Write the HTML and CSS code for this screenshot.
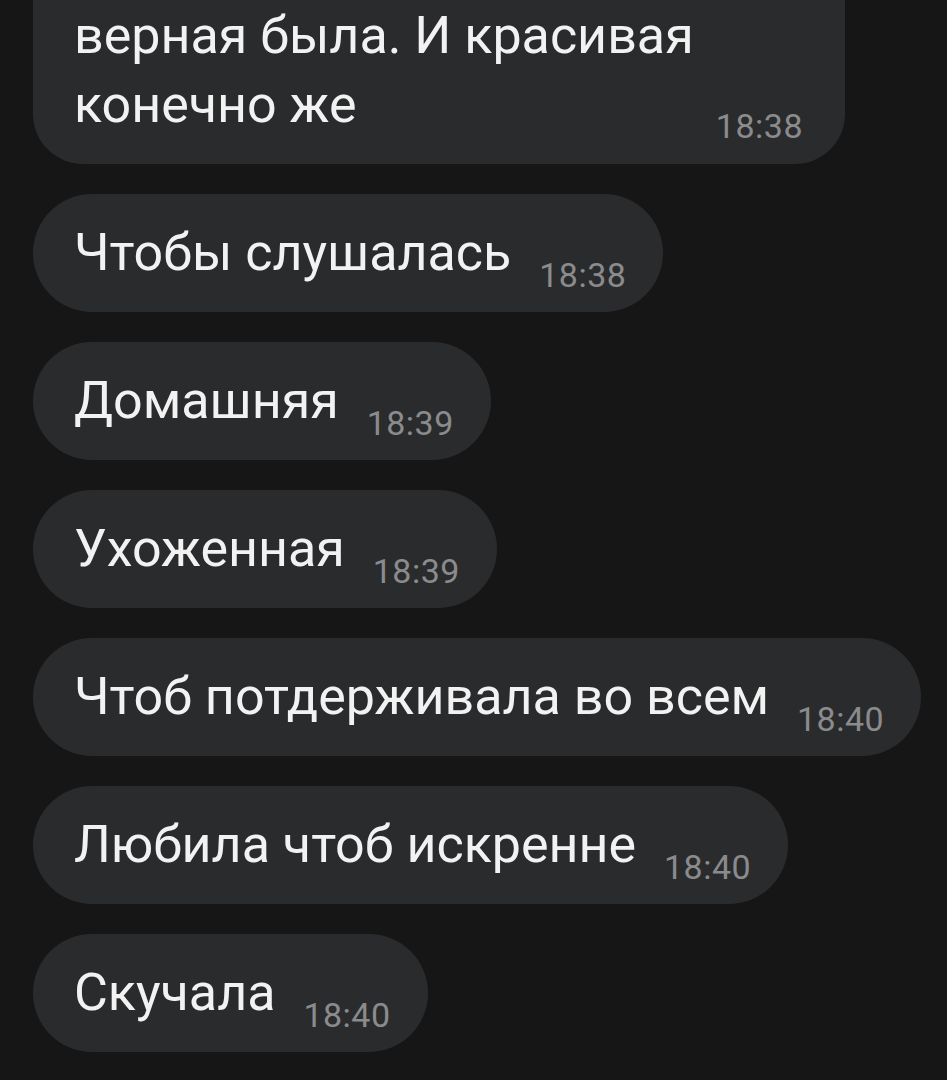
FILE: index.html
```html
<!DOCTYPE html>
<html>
<head>
  <title>Chat</title>
  <link rel="stylesheet" href="styles.css">
</head>
<body>
  <div class="chat">
    <div class="msg msg-long">
      <span class="text">верная была. И красивая<br>конечно же</span>
      <span class="time">18:38</span>
    </div>
    <div class="msg">
      <span class="text">Чтобы слушалась</span>
      <span class="time">18:38</span>
    </div>
    <div class="msg">
      <span class="text">Домашняя</span>
      <span class="time">18:39</span>
    </div>
    <div class="msg">
      <span class="text">Ухоженная</span>
      <span class="time">18:39</span>
    </div>
    <div class="msg">
      <span class="text">Чтоб потдерживала во всем</span>
      <span class="time">18:40</span>
    </div>
    <div class="msg">
      <span class="text">Любила чтоб искренне</span>
      <span class="time">18:40</span>
    </div>
    <div class="msg">
      <span class="text">Скучала</span>
      <span class="time">18:40</span>
    </div>
  </div>
</body>
</html>
```

FILE: styles.css
```css
body {
  margin: 0;
  background: #161617;
  color: #f2f2f2;
  font-family: Roboto, "Liberation Sans", sans-serif;
}
.chat {
  display: flex;
  flex-direction: column;
  align-items: flex-start;
  gap: 30px;
  padding: 0 0 0 33px;
  margin-top: -56px;
}
.msg {
  background: #2a2b2d;
  border-radius: 59px;
  padding: 24px 37px 25px 41px;
  font-size: 52px;
  line-height: 69px;
  white-space: nowrap;
}
.msg-long {
  width: 729px;
  border-radius: 0 0 50px 50px;
  padding-top: 57px;
  padding-right: 42px;
  padding-bottom: 25px;
  display: flex;
  justify-content: space-between;
  align-items: flex-end;
}
.time {
  display: inline-block;
  margin-left: 15px;
  font-size: 34px;
  letter-spacing: 0.5px;
  line-height: 0;
  color: #8b8b8d;
  vertical-align: -17px;
}
.msg-long .time {
  line-height: 34px;
  margin-bottom: -4px;
}
```
